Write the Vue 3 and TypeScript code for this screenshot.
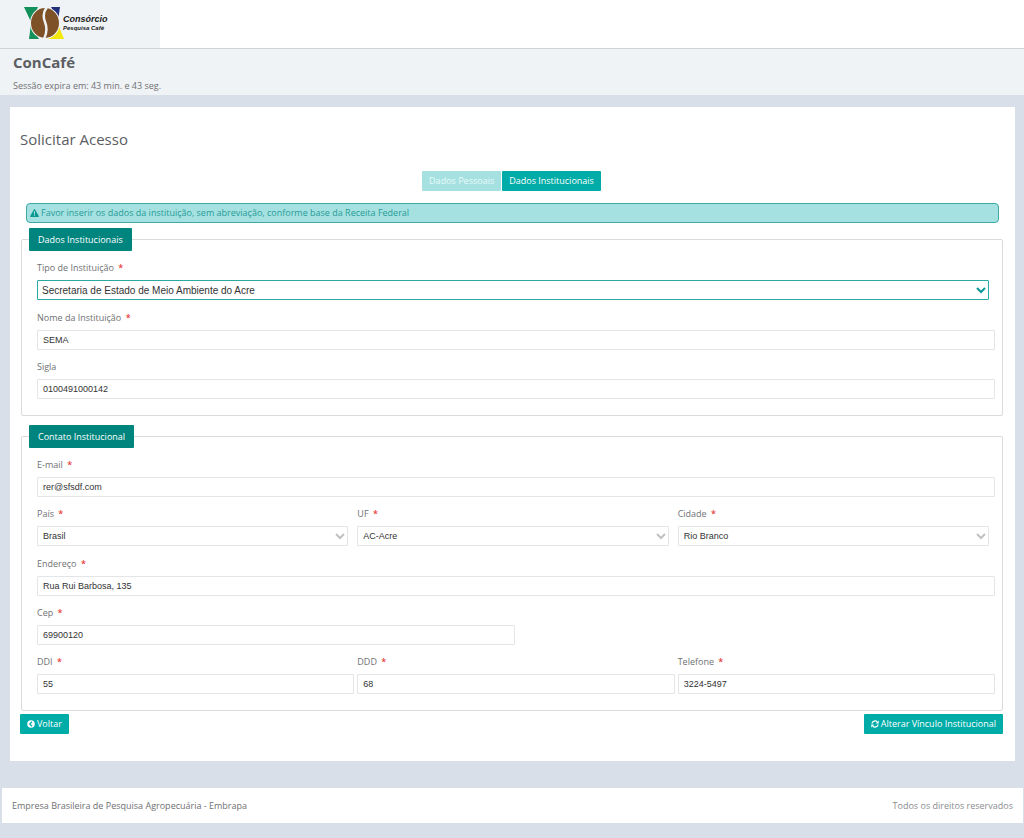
<script setup lang="ts">
import { ref } from 'vue'

interface Field {
  id: string
  label: string
  value: string
  required?: boolean
  select?: boolean
  active?: boolean
  width?: 'full' | 'half' | 'third' | 'third first'
}

interface Section {
  title: string
  fields: Field[]
}

const sections = ref<Section[]>([
  {
    title: 'Dados Institucionais',
    fields: [
      { id: 'tipo', label: 'Tipo de Instituição', value: 'Secretaria de Estado de Meio Ambiente do Acre', required: true, select: true, active: true },
      { id: 'nome', label: 'Nome da Instituição', value: 'SEMA', required: true },
      { id: 'sigla', label: 'Sigla', value: '0100491000142' },
    ],
  },
  {
    title: 'Contato Institucional',
    fields: [
      { id: 'email', label: 'E-mail', value: 'rer@sfsdf.com', required: true },
      { id: 'pais', label: 'País', value: 'Brasil', required: true, select: true, width: 'third first' },
      { id: 'uf', label: 'UF', value: 'AC-Acre', required: true, select: true, width: 'third' },
      { id: 'cidade', label: 'Cidade', value: 'Rio Branco', required: true, select: true, width: 'third' },
      { id: 'endereco', label: 'Endereço', value: 'Rua Rui Barbosa, 135', required: true },
      { id: 'cep', label: 'Cep', value: '69900120', required: true, width: 'half' },
      { id: 'ddi', label: 'DDI', value: '55', required: true, width: 'third first' },
      { id: 'ddd', label: 'DDD', value: '68', required: true, width: 'third' },
      { id: 'telefone', label: 'Telefone', value: '3224-5497', required: true, width: 'third' },
    ],
  },
])
</script>

<template>
  <div class="page">
    <header class="topbar">
      <div class="brand">
        <svg class="mark" viewBox="0 0 42 33" aria-hidden="true">
          <path d="M0 0H14L7 15Z" fill="#14915a" />
          <path d="M27 0H36L34 14Z" fill="#22307c" />
          <path d="M7 17L15 32H5Z" fill="#14915a" />
          <path d="M34 17L40 32H23Z" fill="#f3e80c" />
          <ellipse cx="21" cy="16" rx="15" ry="16" fill="#eff3f6" />
          <ellipse cx="21" cy="16" rx="14" ry="15" fill="#7f5127" />
          <path d="M23 0C19 5 19 10 21 15S23 26 20 32" fill="none" stroke="#eff3f6" stroke-width="2.500" />
        </svg>
        <div class="brand-text">
          <span class="brand-main">Consórcio</span>
          <span class="brand-sub">Pesquisa Café</span>
        </div>
      </div>
    </header>

    <div class="heading">
      <h1>ConCafé</h1>
      <p>Sessão expira em: 43 min. e 43 seg.</p>
    </div>

    <main class="card">
      <h2>Solicitar Acesso</h2>
      <nav class="tabs">
        <button type="button" class="btn" disabled>Dados Pessoais</button>
        <button type="button" class="btn">Dados Institucionais</button>
      </nav>

      <div class="notice" role="alert">
        <svg viewBox="0 0 16 14" aria-hidden="true">
          <path fill-rule="evenodd" d="M8 0Q8.600 0 9 .7L15.800 12.700Q16 14 15 14H1Q0 14 .2 12.700L7 .7Q7.400 0 8 0ZM6.800 4L7.200 9H8.800L9.200 4ZM7 10.200V12H9V10.200Z" />
        </svg>
        <span>Favor inserir os dados da instituição, sem abreviação, conforme base da Receita Federal</span>
      </div>

      <form @submit.prevent>
        <fieldset v-for="section in sections" :key="section.title">
          <legend>{{ section.title }}</legend>
          <div class="fields">
            <div v-for="field in section.fields" :key="field.id" class="field" :class="field.width">
              <label :for="field.id">{{ field.label }} <span v-if="field.required" class="star">*</span></label>
              <div v-if="field.select" class="select" :class="{ active: field.active }">
                <select :id="field.id" v-model="field.value">
                  <option>{{ field.value }}</option>
                </select>
                <svg viewBox="0 0 10 7" aria-hidden="true"><path d="M1 1L5 5L9 1" /></svg>
              </div>
              <input v-else :id="field.id" v-model="field.value" type="text" />
            </div>
          </div>
        </fieldset>

        <div class="actions">
          <button type="button" class="btn">
            <svg viewBox="0 0 16 16" aria-hidden="true">
              <circle cx="8" cy="8" r="7.500" fill="#fff" />
              <path d="M10 3.500L5.500 8L10 12.500" fill="none" stroke="#00aca8" stroke-width="2.500" />
            </svg>
            Voltar
          </button>
          <button type="submit" class="btn">
            <svg viewBox="0 0 16 16" aria-hidden="true">
              <path d="M2 7A6 6 0 0 1 12.500 4M14 9A6 6 0 0 1 3.500 12" fill="none" stroke="#fff" stroke-width="2.600" />
              <path d="M15.500 1V7H9.500ZM.5 15V9H6.500Z" fill="#fff" />
            </svg>
            Alterar Vínculo Institucional
          </button>
        </div>
      </form>
    </main>

    <footer>
      <span>Empresa Brasileira de Pesquisa Agropecuária - Embrapa</span>
      <span class="rights">Todos os direitos reservados</span>
    </footer>
  </div>
</template>

<style>
body {
  margin: 0;
  background: #d8dfe8;
}
</style>

<style scoped>
.page {
  font: 9px/16px "Open Sans", "Noto Sans", sans-serif;
  color: #6f7173;
  padding-bottom: 15px;
}
.page *,
.page {
  box-sizing: border-box;
}
.topbar {
  background: #fff;
  border-bottom: 1px solid #cdd2d6;
}
.brand {
  display: flex;
  align-items: center;
  width: 160px;
  height: 48px;
  padding: 0 0 2px 24px;
  background: #eff3f6;
}
.mark {
  width: 42px;
  height: 33px;
}
.brand-text {
  display: flex;
  flex-direction: column;
  margin-left: -3px;
  font-family: "Liberation Sans Narrow", "Liberation Sans", sans-serif;
  font-style: italic;
  font-weight: bold;
  color: #222;
}
.brand-main {
  font-size: 9px;
  line-height: 9px;
}
.brand-sub {
  font-size: 6px;
  line-height: 8px;
}
.heading {
  height: 46px;
  padding: 3px 13px 0;
  background: #eff3f6;
}
h1,
h2,
p {
  margin: 0;
}
h1 {
  font-size: 15px;
  line-height: 20px;
  font-weight: 700;
  color: #5b5e62;
}
.heading p {
  margin-top: 6px;
}
.card {
  margin: 12px 9px 0 10px;
  padding: 22px 12px 27px 10px;
  background: #fff;
}
h2 {
  font-size: 15px;
  line-height: 20px;
  font-weight: 400;
  color: #5b5e62;
}
.tabs {
  display: flex;
  justify-content: center;
  gap: 1px;
  margin-top: 22px;
}
.btn {
  display: flex;
  align-items: center;
  gap: 2px;
  height: 20px;
  padding: 0 7px;
  border: 0;
  border-radius: 1px;
  background: #00aca8;
  color: #fff;
  font: inherit;
  font-weight: 500;
  white-space: nowrap;
}
.btn:disabled {
  background: #a5e1e0;
  color: #e8fafa;
}
.btn svg {
  width: 8px;
  height: 8px;
}
.notice {
  display: flex;
  align-items: center;
  gap: 2px;
  height: 20px;
  margin: 12px 4px 5px 6px;
  padding: 0 3px;
  border: 1px solid #3fa9a5;
  border-radius: 4px;
  background: #a5e1e0;
  color: #259c98;
}
.notice svg {
  width: 9px;
  height: 8px;
  fill: #0b9792;
}
fieldset {
  min-width: 0;
  margin: 0 0 9px 1px;
  padding: 0 7px 16px 15px;
  border: 1px solid #d9dbdd;
  border-radius: 2px;
}
legend {
  height: 23px;
  margin-left: -8px;
  padding: 0 9px;
  border-radius: 1px;
  background: #00857e;
  color: #fff;
  font-weight: 500;
  line-height: 23px;
}
.fields {
  display: grid;
  grid-template-columns: repeat(6, 1fr);
  column-gap: 3px;
  row-gap: 9px;
  padding-top: 9px;
}
.field {
  grid-column: 1 / -1;
  min-width: 0;
}
.field.half {
  grid-column: 1 / span 3;
}
.field.third {
  grid-column: span 2;
}
.field.first {
  grid-column: 1 / span 2;
}
label {
  display: block;
  margin-bottom: 4px;
}
.star {
  margin-left: 2px;
  color: #e8403c;
  font-weight: 600;
}
input,
select {
  display: block;
  width: 100%;
  height: 20px;
  margin: 0;
  padding: 0 5px;
  border: 1px solid #e4e5e7;
  border-radius: 1px;
  background: #fff;
  color: #333;
  font: 9px "Liberation Sans", Arial, sans-serif;
  appearance: none;
}
.select {
  position: relative;
  margin: 0 6px 1px 0;
}
.select svg {
  position: absolute;
  top: 7px;
  right: 3px;
  width: 10px;
  height: 7px;
  fill: none;
  stroke: #bfc2c4;
  stroke-width: 2;
  pointer-events: none;
}
.active select {
  padding: 0 4px;
  border-color: #2aa9a4;
  font-size: 10px;
}
.active svg {
  stroke: #0b9792;
}
.actions {
  display: flex;
  justify-content: space-between;
  margin-top: -6px;
}
footer {
  display: flex;
  align-items: center;
  justify-content: space-between;
  height: 35px;
  margin: 27px 1px 0 2px;
  padding: 0 10px;
  background: #fff;
}
.rights {
  color: #8a8d90;
}
</style>
